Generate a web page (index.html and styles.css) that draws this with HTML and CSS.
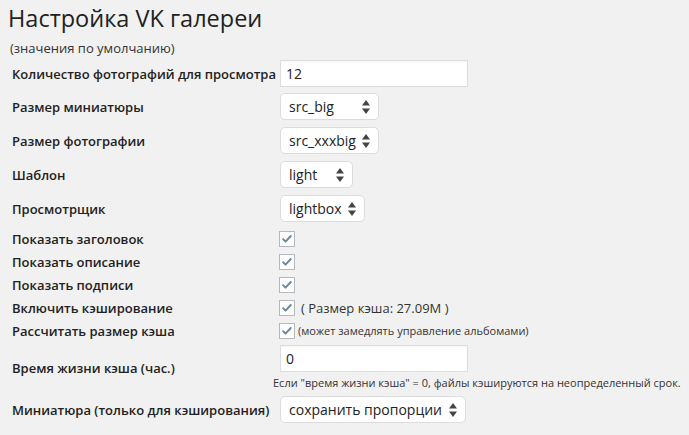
FILE: index.html
```html
<!DOCTYPE html>
<html lang="ru">
<head>
<meta charset="utf-8">
<title>Настройка VK галереи</title>
<link rel="stylesheet" href="styles.css">
</head>
<body>
<div class="wrap">
  <h1 class="title">Настройка VK галереи</h1>
  <p class="subtitle">(значения по умолчанию)</p>
  <div class="form">
    <div class="row row-field">
      <label class="label">Количество фотографий для просмотра</label>
      <div class="field"><input class="text-input" type="text" value="12"></div>
    </div>
    <div class="row row-field gap6">
      <label class="label">Размер миниатюры</label>
      <div class="field"><span class="select w99"><span class="select-text">src_big</span><svg class="arrows" viewBox="0 0 8 14" width="8" height="14"><path d="M4 0 L8 5.5 H0 Z M0 8.5 H8 L4 14 Z" fill="#444"/></svg></span></div>
    </div>
    <div class="row row-field">
      <label class="label">Размер фотографии</label>
      <div class="field"><span class="select w99"><span class="select-text">src_xxxbig</span><svg class="arrows" viewBox="0 0 8 14" width="8" height="14"><path d="M4 0 L8 5.5 H0 Z M0 8.5 H8 L4 14 Z" fill="#444"/></svg></span></div>
    </div>
    <div class="row row-field">
      <label class="label">Шаблон</label>
      <div class="field"><span class="select w73"><span class="select-text">light</span><svg class="arrows" viewBox="0 0 8 14" width="8" height="14"><path d="M4 0 L8 5.5 H0 Z M0 8.5 H8 L4 14 Z" fill="#444"/></svg></span></div>
    </div>
    <div class="row row-field">
      <label class="label">Просмотрщик</label>
      <div class="field"><span class="select w85"><span class="select-text">lightbox</span><svg class="arrows" viewBox="0 0 8 14" width="8" height="14"><path d="M4 0 L8 5.5 H0 Z M0 8.5 H8 L4 14 Z" fill="#444"/></svg></span></div>
    </div>
    <div class="row row-check first-check">
      <label class="label">Показать заголовок</label>
      <div class="field"><span class="checkbox"><svg viewBox="0 0 16 16" width="14" height="14"><path d="M3.5 8.2 L6.3 11 L12.3 4.6" fill="none" stroke="#6a8896" stroke-width="2.2" stroke-linecap="round" stroke-linejoin="round"/></svg></span></div>
    </div>
    <div class="row row-check">
      <label class="label">Показать описание</label>
      <div class="field"><span class="checkbox"><svg viewBox="0 0 16 16" width="14" height="14"><path d="M3.5 8.2 L6.3 11 L12.3 4.6" fill="none" stroke="#6a8896" stroke-width="2.2" stroke-linecap="round" stroke-linejoin="round"/></svg></span></div>
    </div>
    <div class="row row-check">
      <label class="label">Показать подписи</label>
      <div class="field"><span class="checkbox"><svg viewBox="0 0 16 16" width="14" height="14"><path d="M3.5 8.2 L6.3 11 L12.3 4.6" fill="none" stroke="#6a8896" stroke-width="2.2" stroke-linecap="round" stroke-linejoin="round"/></svg></span></div>
    </div>
    <div class="row row-check">
      <label class="label">Включить кэширование</label>
      <div class="field"><span class="checkbox"><svg viewBox="0 0 16 16" width="14" height="14"><path d="M3.5 8.2 L6.3 11 L12.3 4.6" fill="none" stroke="#6a8896" stroke-width="2.2" stroke-linecap="round" stroke-linejoin="round"/></svg></span><span class="note">( Размер кэша: 27.09M )</span></div>
    </div>
    <div class="row row-check">
      <label class="label">Рассчитать размер кэша</label>
      <div class="field"><span class="checkbox"><svg viewBox="0 0 16 16" width="14" height="14"><path d="M3.5 8.2 L6.3 11 L12.3 4.6" fill="none" stroke="#6a8896" stroke-width="2.2" stroke-linecap="round" stroke-linejoin="round"/></svg></span><span class="note small">(может замедлять управление альбомами)</span></div>
    </div>
    <div class="row row-field row-time">
      <label class="label">Время жизни кэша (час.)</label>
      <div class="field field-col"><input class="text-input" type="text" value="0"><p class="desc">Если "время жизни кэша" = 0, файлы кэшируются на неопределенный срок.</p></div>
    </div>
    <div class="row row-field row-last">
      <label class="label">Миниатюра (только для кэширования)</label>
      <div class="field"><span class="select w186"><span class="select-text">сохранить пропорции</span><svg class="arrows" viewBox="0 0 8 14" width="8" height="14"><path d="M4 0 L8 5.5 H0 Z M0 8.5 H8 L4 14 Z" fill="#444"/></svg></span></div>
    </div>
  </div>
</div>
</body>
</html>
```

FILE: styles.css
```css
html, body {
  margin: 0;
  padding: 0;
  background: #f1f1f1;
}
body {
  font-family: "Open Sans", "Noto Sans", sans-serif;
  color: #23282d;
  font-size: 13px;
}
.wrap {
  padding: 3px 0 0 8px;
}
.title {
  margin: 0;
  font-size: 23.5px;
  font-weight: 400;
  line-height: 30px;
  color: #222;
}
.subtitle {
  margin: 7px 0 0 2px;
  font-size: 13px;
  line-height: 16px;
  color: #333;
}
.form {
  display: flex;
  flex-direction: column;
  margin-top: 4px;
  padding-left: 4px;
}
.row {
  display: flex;
  align-items: center;
}
.row-field {
  margin-bottom: 7px;
}
.gap6 {
  margin-top: -1px;
}
.row-check {
  height: 23px;
  margin-bottom: 0;
}
.first-check {
  margin-top: -2px;
}
.label {
  width: 268px;
  flex: none;
  font-weight: 600;
  font-size: 13px;
  color: #222;
}
.field {
  display: flex;
  align-items: center;
}
.text-input {
  box-sizing: border-box;
  width: 188px;
  height: 27px;
  margin: 0;
  padding: 0 5px;
  border: 1px solid #dddddd;
  background: #fff;
  font-family: "Open Sans", "Noto Sans", sans-serif;
  font-size: 14px;
  color: #222;
  box-shadow: inset 0 1px 2px rgba(0,0,0,0.04);
  outline: none;
}
.select {
  position: relative;
  box-sizing: border-box;
  display: flex;
  align-items: center;
  height: 27px;
  padding: 0 8px;
  border: 1px solid #dcdcdc;
  border-radius: 5px;
  background: #fff;
  font-size: 14px;
  color: #222;
}
.select-text {
  flex: 1;
}
.arrows {
  flex: none;
}
.w99 { width: 99px; }
.w73 { width: 73px; }
.w85 { width: 85px; }
.w186 { width: 186px; }
.checkbox {
  box-sizing: border-box;
  width: 16px;
  height: 16px;
  margin-left: -1px;
  border: 1px solid #b4b9be;
  background: #fdfdfd;
  display: flex;
  align-items: center;
  justify-content: center;
}
.note {
  margin-left: 6px;
  font-size: 13px;
  color: #333;
}
.note.small {
  margin-left: 3px;
  font-size: 11px;
}
.row-time {
  margin-top: 3px;
}
.field-col {
  flex-direction: column;
  align-items: flex-start;
}
.desc {
  margin: 4px 0 0 -7px;
  font-size: 11px;
  line-height: 14px;
  color: #333;
  white-space: nowrap;
}
.row-last {
  margin-top: -1px;
}
```
